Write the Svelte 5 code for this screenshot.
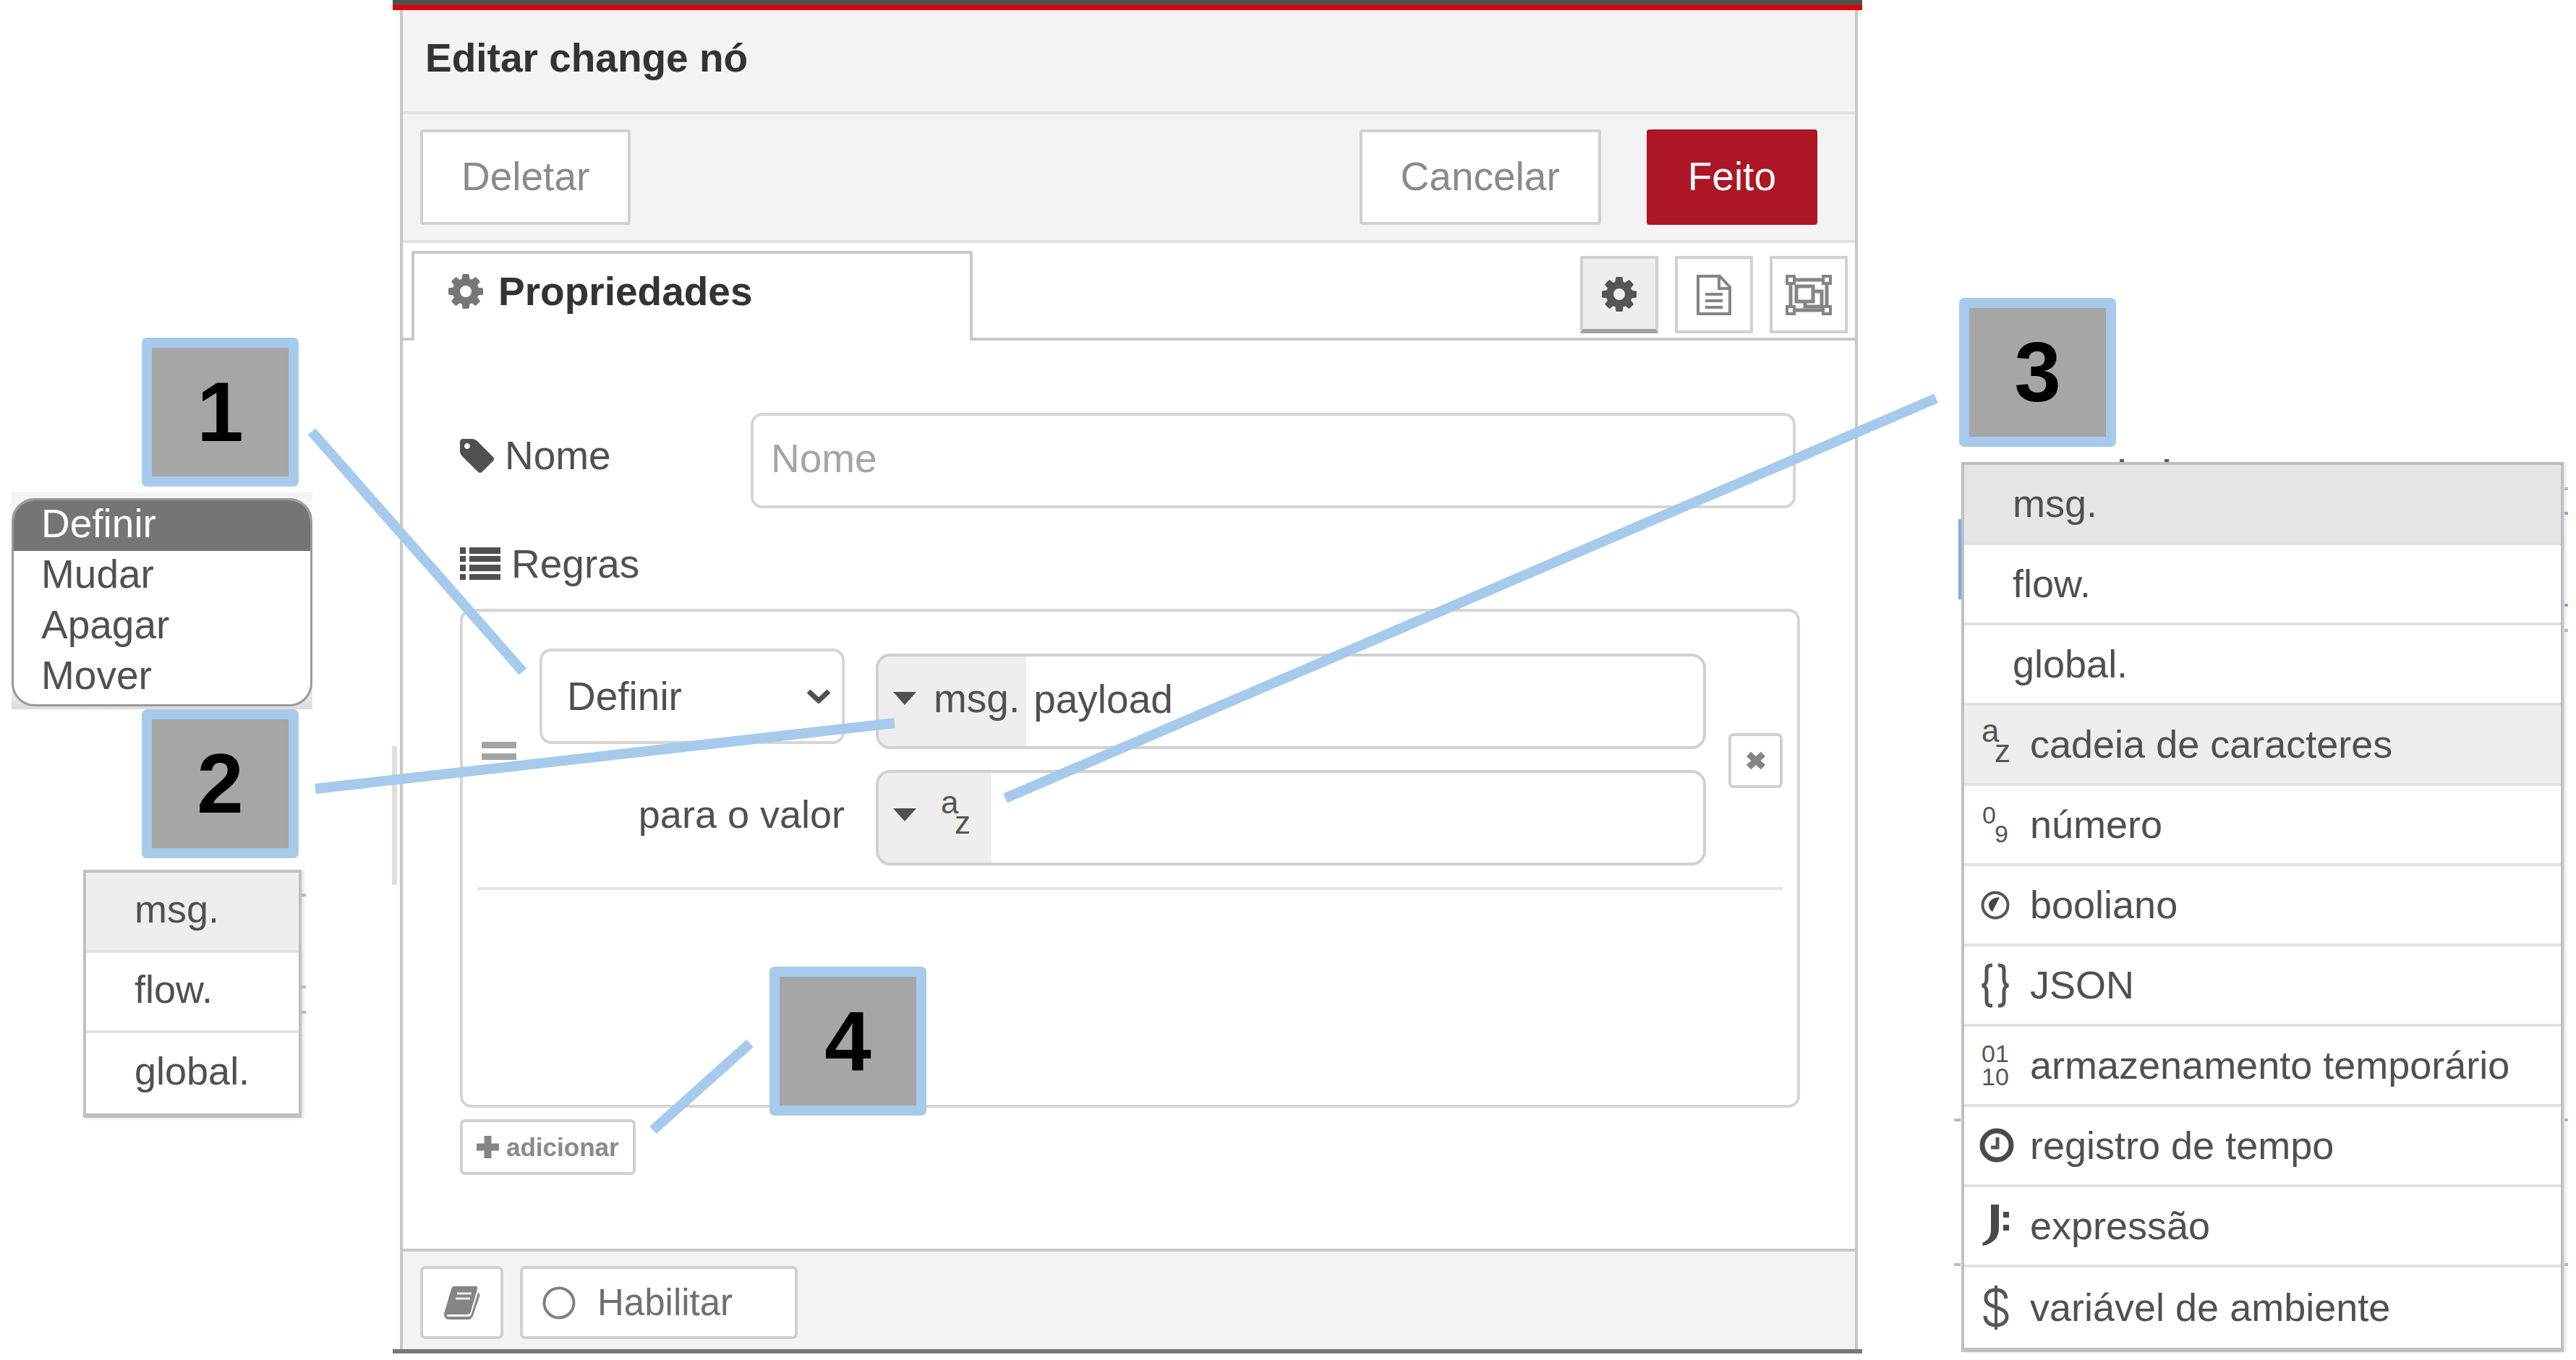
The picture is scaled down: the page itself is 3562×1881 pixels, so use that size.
<script>
  const actions = ['Definir', 'Mudar', 'Apagar', 'Mover'];
  const scopes = ['msg.', 'flow.', 'global.'];
  const types = [
    { label: 'msg.', state: 'hover' },
    { label: 'flow.' },
    { label: 'global.' },
    { label: 'cadeia de caracteres', icon: 'az', state: 'active' },
    { label: 'número', icon: 'num' },
    { label: 'booliano', icon: 'bool' },
    { label: 'JSON', icon: 'json' },
    { label: 'armazenamento temporário', icon: 'bin' },
    { label: 'registro de tempo', icon: 'clock' },
    { label: 'expressão', icon: 'expr' },
    { label: 'variável de ambiente', icon: 'env' }
  ];
  let action = $state('Definir');
  let name = $state('');
  let property = $state('payload');
  let value = $state('');
</script>

{#snippet gear()}
  <svg class="gear" viewBox="0 128 1536 1536" aria-hidden="true"><path fill="currentColor" d="M1024 896q0-106-75-181t-181-75-181 75-75 181 75 181 181 75 181-75 75-181zm512-109v222q0 12-8 23t-20 13l-185 28q-19 54-39 91 35 50 107 138 10 12 10 25t-9 23q-27 37-99 108t-94 71q-12 0-26-9l-138-108q-44 23-91 38-16 136-29 186-7 28-36 28h-222q-14 0-24.500-8.500t-11.500-21.500l-28-184q-49-16-90-37l-141 107q-10 9-25 9-14 0-25-11-126-114-165-168-7-10-7-23 0-12 8-23 15-21 51-66.500t54-70.500q-27-50-41-99l-183-27q-13-2-21-12.500t-8-23.500v-222q0-12 8-23t19-13l186-28q14-46 39-92-40-57-107-138-10-12-10-24 0-10 9-23 26-36 98.500-107.500t94.500-71.500q13 0 26 10l138 107q44-23 91-38 16-136 29-186 7-28 36-28h222q14 0 24.500 8.500t11.500 21.500l28 184q49 16 90 37l142-107q9-9 24-9 13 0 25 10 129 119 165 170 7 8 7 22 0 12-8 23-15 21-51 66.500t-54 70.500q26 50 41 98l183 28q13 2 21 12.500t8 23.500z" /></svg>
{/snippet}

{#snippet caret()}
  <svg class="caret" viewBox="0 0 32 18" aria-hidden="true"><path fill="#505050" d="M0 0h32L16 18z" /></svg>
{/snippet}

{#snippet typeIcon(kind)}
  <svg class="type-icon" viewBox="0 0 65 64" aria-hidden="true" fill="none" stroke="#555">
    {#if kind === 'az'}
      <text class="glyph" x="0" y="29">a</text>
      <text class="glyph" x="18" y="57">z</text>
    {:else if kind === 'num'}
      <text class="glyph digit" x="1" y="31">0</text>
      <text class="glyph digit" x="18" y="57">9</text>
    {:else if kind === 'bool'}
      <circle cx="19" cy="33" r="17.500" stroke-width="4" />
      <path fill="#444" stroke="none" d="M25 22c-8 0-15 4-15 11 0 4 2 7 5 9z" />
    {:else if kind === 'json'}
      <path stroke-width="5" d="M15 5c-7 0-8 2-8 8v11c0 6-2 8-6 9 4 1 6 3 6 9v11c0 6 1 8 8 8M23 5c7 0 8 2 8 8v11c0 6 2 8 6 9-4 1-6 3-6 9v11c0 6-1 8-8 8" />
    {:else if kind === 'bin'}
      <text class="glyph digit" x="0" y="28">01</text>
      <text class="glyph digit" x="0" y="60">10</text>
    {:else if kind === 'clock'}
      <circle cx="21" cy="32" r="20" stroke-width="7" stroke="#4a4a4a" />
      <path stroke-width="5" d="M22 21v14h-9" />
    {:else if kind === 'expr'}
      <path fill="#4a4a4a" stroke="none" d="M13 3h11v33c0 14-9 21-22 24l-1-4c9-4 12-9 12-19zM30 13h8v8h-8zM30 31h8v8h-8z" />
    {:else if kind === 'env'}
      <path stroke-width="5" d="M34 20c-1-8-6-12-14-12S6 12 6 20c0 7 5 9 14 12s15 6 15 13-6 12-15 12S5 52 5 44" />
      <path stroke-width="4" d="M20 2v61" />
    {/if}
  </svg>
{/snippet}

<main class="guide">
  <section class="left" aria-label="Opções de ação">
    <div class="callout">1</div>
    <div class="list-back">
      <ul class="listbox" role="listbox" aria-label="Ação">
        {#each actions as item}
          <li role="option" aria-selected={item === action} class:selected={item === action}>{item}</li>
        {/each}
      </ul>
    </div>
    <div class="callout">2</div>
    <div class="menu scopes">
      {#each scopes as item, i}
        <button type="button" class:active={i === 0}><span>{item}</span></button>
      {/each}
    </div>
  </section>

  <section class="dialog">
    <div class="top-strip"></div>
    <div class="panel">
      <header><h1>Editar change nó</h1></header>
      <div class="toolbar">
        <button type="button" class="btn">Deletar</button>
        <div class="actions">
          <button type="button" class="btn">Cancelar</button>
          <button type="button" class="btn primary">Feito</button>
        </div>
      </div>
      <div class="tabs">
        <button type="button" class="tab">{@render gear()}Propriedades</button>
        <div class="tab-icons">
          <button type="button" class="square on" aria-label="Propriedades">{@render gear()}</button>
          <button type="button" class="square" aria-label="Descrição">
            <svg width="48" height="56" viewBox="0 0 48 56" fill="none" stroke="#858585" stroke-width="4"><path d="M2 2h30l14 15v37H2zM31 2v17h15" /><path d="M12 27h24M12 36h24M12 45h24" /></svg>
          </button>
          <button type="button" class="square" aria-label="Aparência">
            <svg width="64" height="56" viewBox="0 0 64 56" fill="none" stroke="#858585"><path stroke-width="5" d="M12 7h40M12 49h40M7 12v32M57 12v32" /><path stroke-width="4" d="M2 2h10v10H2zM52 2h10v10H52zM2 44h10v10H2zM52 44h10v10H52z" /><path stroke-width="5" d="M15 16h23v21H15zM40 23h10v21H27v-6" /></svg>
          </button>
        </div>
      </div>

      <div class="content">
        <div class="name-row">
          <label for="node-name">
            <svg width="47" height="49" viewBox="0 128 1515 1515" aria-hidden="true"><path fill="#505050" d="M448 448q0-53-37.500-90.500t-90.500-37.500-90.500 37.500-37.500 90.500 37.500 90.500 90.500 37.500 90.500-37.500 37.500-90.500zm1067 576q0 53-37 90l-491 492q-39 37-91 37-53 0-90-37l-715-716q-38-37-64.500-101t-26.500-117v-416q0-52 38-90t90-38h416q53 0 117 26.500t102 64.500l715 714q37 39 37 91z" /></svg>
            Nome
          </label>
          <input id="node-name" type="text" placeholder="Nome" bind:value={name} />
        </div>
        <div class="rules-title">
          <svg width="56" height="46" viewBox="0 0 56 46" aria-hidden="true"><path fill="#505050" d="M0 0h8v9H0zM13 0h43v9H13zM0 12h8v8H0zM13 12h43v8H13zM0 24h8v9H0zM13 24h43v9H13zM0 37h8v8H0zM13 37h43v8H13z" /></svg>
          Regras
        </div>
        <ol class="rules">
          <li>
            <span class="handle"><i></i><i></i><i></i></span>
            <div class="rule-labels">
              <div class="select-box">
                <select aria-label="Ação da regra" bind:value={action}>
                  {#each actions as item}<option>{item}</option>{/each}
                </select>
                <svg width="34" height="20" viewBox="0 0 34 20" fill="none" aria-hidden="true"><path stroke="#505050" stroke-width="7" d="M3 3l14 13L31 3" /></svg>
              </div>
              <label for="rule-value">para o valor</label>
            </div>
            <div class="rule-fields">
              <div class="typed">
                <button type="button" aria-label="Tipo da propriedade: msg.">{@render caret()}<span>msg.</span></button>
                <input type="text" aria-label="Propriedade" bind:value={property} />
              </div>
              <div class="typed">
                <button type="button" aria-label="Tipo do valor: cadeia de caracteres">
                  {@render caret()}
                  <svg class="az" viewBox="0 0 71 64" aria-hidden="true"><text class="glyph" x="10" y="30">a</text><text class="glyph" x="29" y="58">z</text></svg>
                </button>
                <input id="rule-value" type="text" bind:value={value} />
              </div>
            </div>
            <button type="button" class="remove" aria-label="Remover regra">
              <svg width="28" height="26" viewBox="0 0 28 26"><path stroke="#858585" stroke-width="9" d="M4 4l20 18M24 4L4 22" /></svg>
            </button>
          </li>
        </ol>
        <button type="button" class="add">
          <svg width="31" height="31" viewBox="0 0 31 31" aria-hidden="true"><path stroke="#858585" stroke-width="10" d="M15.500 0v31M0 15.500h31" /></svg>
          adicionar
        </button>
      </div>

      <footer>
        <button type="button" class="book" aria-label="Ajuda">
          <svg width="50" height="46" viewBox="0 0 50 46"><path fill="#858585" d="M14 0h29q4 0 3 4l-9 31q-1 4-5 4H8q-5 0-4 3h29q4 0 5-4l9-29q3 1 2 5l-9 27q-2 5-7 5H7q-7 0-7-8L10 4q1-4 4-4z" /><path stroke="#eee" stroke-width="3" d="M18 10h20M16 17h20" /></svg>
        </button>
        <button type="button" class="enable">
          <svg width="46" height="46" viewBox="0 0 46 46" aria-hidden="true"><circle cx="23" cy="23" r="20.500" fill="none" stroke="#808080" stroke-width="4" /></svg>
          Habilitar
        </button>
      </footer>
    </div>
    <div class="bottom-strip"></div>
  </section>

  <section class="right" aria-label="Tipos de valor">
    <div class="callout">3</div>
    <div class="menu types">
      {#each types as item}
        <button type="button" class={item.state}>
          {#if item.icon}{@render typeIcon(item.icon)}{:else}<i class="indent"></i>{/if}<span>{item.label}</span>
        </button>
      {/each}
    </div>
  </section>

  <svg class="overlay" viewBox="0 0 3562 1881" preserveAspectRatio="none" aria-hidden="true">
    <path fill="#dedede" d="M542 1032h7v192h-7z" />
    <path fill="#5a5f66" d="M2931 635h6v4h-6zM2993 635h6v4h-6z" />
    <path fill="#7fa9e6" d="M2708 718h4v111h-4zM3546 708h5v4h-5zM3546 835h5v4h-5z" />
    <path fill="#b8b8b8" d="M417 1236h6v4h-6zM417 1363h6v4h-6zM417 1398h6v4h-6zM3546 674h5v4h-5zM3546 870h5v4h-5zM2702 1547h9v4h-9zM3546 1547h5v4h-5zM2702 1747h9v4h-9zM3546 1747h5v4h-5z" />
    <path fill="none" stroke="#a6caec" stroke-width="14" d="M431 597L723 929M436 1091L1237 1000M1390 1104L2677 551M903 1563L1037 1443" />
  </svg>
  <div class="callout fourth">4</div>
</main>

<style>
  :global(body) { margin: 0; background: #fff; }
  .guide {
    position: relative;
    display: grid;
    grid-template-columns: 543fr 2032fr 987fr;
    align-items: start;
    font-family: "Liberation Sans", Arial, sans-serif;
    font-size: 55px;
    line-height: 64px;
    color: #505050;
  }
  .guide * { box-sizing: border-box; }
  button, input, select { font: inherit; color: inherit; margin: 0; outline: 0; }
  button { padding: 0; background: #fff; border: 4px solid #d0d0d0; }
  svg { display: block; flex: none; }
  .overlay {
    position: absolute;
    left: 0;
    top: 0;
    width: 100%;
    height: 1881px;
    pointer-events: none;
  }

  .callout {
    display: grid;
    place-items: center;
    width: 217px;
    height: 206px;
    background: #a6a6a6;
    border: 14px solid #a6caec;
    border-radius: 7px;
    color: #000;
    font-size: 116px;
    font-weight: 700;
    line-height: 128px;
  }
  .fourth { position: absolute; left: 29.870%; top: 1337px; }

  .left { display: flex; flex-direction: column; padding-top: 467px; }
  .left .callout { margin-left: 196px; }
  .list-back {
    margin: 8px 111px 0 16px;
    padding: 8px 0 4px;
    background: linear-gradient(#f3f3f3, #fff 20%, #fff 80%, #dcdcdc);
  }
  .listbox {
    margin: 0;
    padding: 0 0 2px;
    list-style: none;
    background: #fff;
    border: 3px solid #999;
    border-radius: 32px;
    overflow: hidden;
  }
  .listbox li { height: 70px; padding-left: 38px; line-height: 64px; }
  .listbox li.selected { background: #757575; color: #fff; }

  .menu {
    display: grid;
    grid-auto-rows: 111px;
    border: 4px solid #c0c0c0;
    border-bottom-width: 6px;
    box-shadow: 3px 1px 4px #e4e4e4;
    font-size: 54px;
  }
  .menu button {
    display: flex;
    align-items: center;
    padding: 0 24px 2px;
    border: 0;
    border-bottom: 4px solid #e2e2e2;
    text-align: left;
    white-space: nowrap;
  }
  .menu button:last-child { border-bottom: 0; }
  .menu button.active { background: #eee; }
  .menu button.hover { background: #e5e5e5; }
  .scopes { width: 302px; margin: 16px 0 0 115px; }
  .scopes button { padding: 0 0 8px 67px; }
  .types { margin: 21px 17px 0 137px; }
  .types span { padding-left: 2px; }
  .indent { width: 41px; }
  .type-icon { width: 65px; height: 64px; overflow: visible; }
  .glyph { font-size: 44px; line-height: 44px; fill: #555; stroke: none; }
  .digit { font-size: 34px; line-height: 34px; }

  .right { padding-top: 412px; }
  .right .callout { margin-left: 134px; }

  .top-strip { height: 14px; background: linear-gradient(#4c5250 50%, #e00000 50%); }
  .bottom-strip { height: 6px; background: #75797c; }
  .panel { margin: 0 6px 0 10px; border: solid #c8c8c8; border-width: 0 4px; background: #fff; }
  header { padding: 34px 31px 42px; background: #f3f3f3; border-bottom: 4px solid #e2e2e2; }
  h1 { margin: 0; font-size: 55px; line-height: 64px; color: #333; }
  .toolbar {
    display: flex;
    justify-content: space-between;
    align-items: center;
    height: 178px;
    padding: 0 52px 0 24px;
    background: #f3f3f3;
    border-bottom: 4px solid #e2e2e2;
  }
  .actions { display: flex; gap: 63px; }
  .btn { height: 132px; padding: 0 53px 2px; border-radius: 4px; color: #8a8a8a; }
  .primary { background: #ad1625; border-color: #ad1625; color: #fff; }

  .tabs {
    display: flex;
    justify-content: space-between;
    align-items: flex-end;
    height: 135px;
    padding: 0 10px 0 12px;
    border-bottom: 4px solid #c8c8c8;
  }
  .tab {
    display: flex;
    align-items: center;
    gap: 21px;
    width: 776px;
    height: 124px;
    margin-bottom: -4px;
    padding: 0 47px 16px;
    border-color: #c8c8c8;
    border-bottom: 0;
    border-radius: 4px 4px 0 0;
    font-weight: 700;
    color: #333;
  }
  .gear { width: 48px; height: 48px; color: #777; }
  .tab-icons { display: flex; gap: 23px; padding-bottom: 6px; }
  .square { display: grid; place-items: center; width: 108px; height: 107px; }
  .square.on { background: #eee; border-bottom: 6px solid #a0a0a0; }
  .square.on .gear { color: #555; }

  .content { padding: 100px 76px 102px 79px; }
  .name-row { display: flex; align-items: center; padding-right: 6px; }
  .name-row label { display: flex; align-items: center; gap: 15px; width: 402px; padding-bottom: 14px; }
  .name-row input {
    flex: 1;
    min-width: 0;
    height: 132px;
    padding: 0 24px 6px;
    border: 4px solid #d5d5d5;
    border-radius: 16px;
  }
  input::placeholder { color: #a5a5a5; opacity: 1; }
  .rules-title { display: flex; align-items: center; gap: 15px; margin: 45px 0 30px; }
  .rules {
    min-height: 690px;
    margin: 0 0 16px;
    padding: 0 20px;
    list-style: none;
    border: 4px solid #d5d5d5;
    border-radius: 16px;
  }
  .rules li {
    display: flex;
    padding-left: 6px;
    border-bottom: 4px solid #e5e5e5;
  }
  .handle { align-self: center; display: grid; gap: 7px; width: 48px; margin: 20px 32px 0 0; }
  .handle i { height: 9px; background: #a3a3a3; }
  .rule-labels { display: grid; grid-auto-rows: 132px; gap: 32px; align-content: start; width: 422px; padding-top: 51px; margin-right: 43px; }
  .rule-labels label { display: flex; align-items: center; justify-content: flex-end; padding-bottom: 2px; font-size: 54px; }
  .select-box { display: grid; align-items: center; }
  .select-box > * { grid-area: 1 / 1; }
  .select-box svg { justify-self: end; margin-right: 19px; pointer-events: none; }
  select {
    width: 100%;
    height: 132px;
    padding: 0 34px;
    appearance: none;
    background: #fff;
    border: 4px solid #d5d5d5;
    border-radius: 16px;
  }
  .rule-fields { display: grid; gap: 29px; flex: 1; min-width: 0; padding: 58px 0 30px; }
  .typed { display: flex; height: 132px; border: 4px solid #d0d0d0; border-radius: 20px; overflow: hidden; }
  .typed button {
    display: flex;
    align-items: center;
    gap: 24px;
    padding: 0 9px 8px 20px;
    background: #eee;
    border: 0;
  }
  .typed input { flex: 1; min-width: 0; padding: 0 10px 6px; border: 0; background: #fff; }
  .caret { width: 32px; height: 18px; }
  .az { width: 71px; height: 64px; overflow: visible; }
  .remove { display: grid; place-items: center; align-self: center; width: 75px; height: 76px; margin: 31px 0 0 31px; border-radius: 7px; }
  .add {
    display: flex;
    align-items: center;
    gap: 10px;
    height: 77px;
    padding: 0 19px;
    border-radius: 7px;
    font-size: 35px;
    font-weight: 700;
    color: #8a8a8a;
  }
  footer {
    display: flex;
    gap: 23px;
    padding: 20px 24px 14px;
    background: #f3f3f3;
    border-top: 4px solid #c8c8c8;
  }
  footer button { height: 101px; border-radius: 7px; }
  .book { display: grid; place-items: center; width: 115px; }
  .enable { display: flex; align-items: center; gap: 30px; width: 384px; padding-left: 27px; font-size: 51px; color: #707070; }
</style>
